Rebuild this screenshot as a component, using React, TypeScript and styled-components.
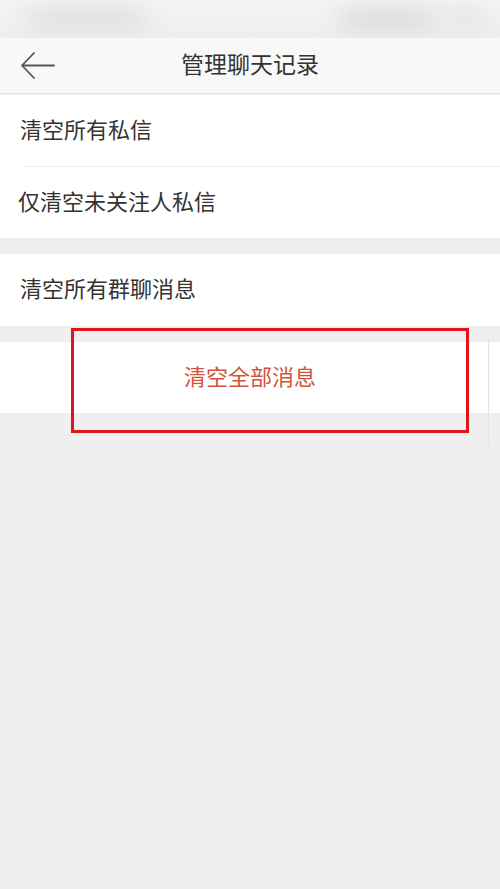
import React from 'react';
import styled, { createGlobalStyle } from 'styled-components';

const GlobalStyle = createGlobalStyle`
  html, body {
    margin: 0;
    padding: 0;
    background: #efefef;
    font-family: "Noto Sans CJK SC", "Noto Sans", sans-serif;
  }
  #root {
    min-height: 889px;
  }
`;

const Page = styled.div`
  width: 500px;
  min-height: 889px;
  background: #efefef;
  position: relative;
  overflow: hidden;
`;

const StatusBar = styled.div`
  height: 38px;
  background: linear-gradient(180deg, #f4f4f4 0%, #eeeeee 100%);
  display: flex;
  align-items: center;
  padding: 0 14px 0 18px;
  box-sizing: border-box;
  overflow: hidden;
`;

const Blur = styled.span<{ width: number; shade: string; push?: boolean }>`
  width: ${p => p.width}px;
  height: 20px;
  margin-left: ${p => (p.push ? 'auto' : '8px')};
  border-radius: 12px;
  background: ${p => p.shade};
  filter: blur(11px);
`;

const NavBar = styled.div`
  height: 55px;
  background: #f8f8f8;
  border-bottom: 1px solid #e2e2e2;
  display: flex;
  align-items: center;
`;

const BackButton = styled.div`
  width: 74px;
  padding-left: 20px;
  display: flex;
  align-items: center;
  box-sizing: border-box;
`;

const Title = styled.div`
  flex: 1;
  text-align: center;
  font-size: 23px;
  color: #333;
  padding-bottom: 6px;
`;

const NavSpacer = styled.div`
  width: 74px;
`;

const Group = styled.div<{ gap?: number }>`
  background: #fff;
  margin-top: ${p => p.gap ?? 0}px;
`;

const Row = styled.div<{ indent?: number; tall?: boolean }>`
  height: ${p => (p.tall ? 72 : 71)}px;
  display: flex;
  align-items: center;
  padding-left: ${p => p.indent ?? 20}px;
  padding-bottom: 6px;
  box-sizing: border-box;
  font-size: 22px;
  color: #333;
`;

const Divider = styled.div`
  height: 1px;
  background: #ececec;
  margin-left: 22px;
`;

const DangerButton = styled.div`
  height: 71px;
  display: flex;
  align-items: center;
  justify-content: center;
  padding-bottom: 6px;
  box-sizing: border-box;
  font-size: 22px;
  color: #d2533a;
  background: #fff;
  margin-top: 16px;
`;

const Highlight = styled.div`
  position: absolute;
  left: 71px;
  top: 328px;
  width: 398px;
  height: 105px;
  border: 3px solid #e0141a;
  box-sizing: border-box;
  pointer-events: none;
`;

const EdgeLine = styled.div`
  position: absolute;
  left: 488px;
  top: 338px;
  width: 1px;
  height: 107px;
  background: #e4e4e4;
`;

export default function App() {
  return (
    <>
      <GlobalStyle />
      <Page>
        <StatusBar>
          <Blur width={120} shade="#dedede" />
          <Blur width={100} shade="#dadada" push />
          <Blur width={40} shade="#e4e4e4" />
        </StatusBar>
        <NavBar>
          <BackButton>
            <svg width="36" height="30" viewBox="0 0 36 30">
              <path
                d="M34 14.5 H2 M14 2 L2 14.5 L14 27"
                fill="none"
                stroke="#555"
                strokeWidth="1.8"
                strokeLinecap="round"
                strokeLinejoin="round"
              />
            </svg>
          </BackButton>
          <Title>管理聊天记录</Title>
          <NavSpacer />
        </NavBar>
        <Group gap={1}>
          <Row>清空所有私信</Row>
          <Divider />
          <Row indent={18}>仅清空未关注人私信</Row>
        </Group>
        <Group gap={16}>
          <Row tall>清空所有群聊消息</Row>
        </Group>
        <DangerButton>清空全部消息</DangerButton>
        <EdgeLine />
        <Highlight />
      </Page>
    </>
  );
}
